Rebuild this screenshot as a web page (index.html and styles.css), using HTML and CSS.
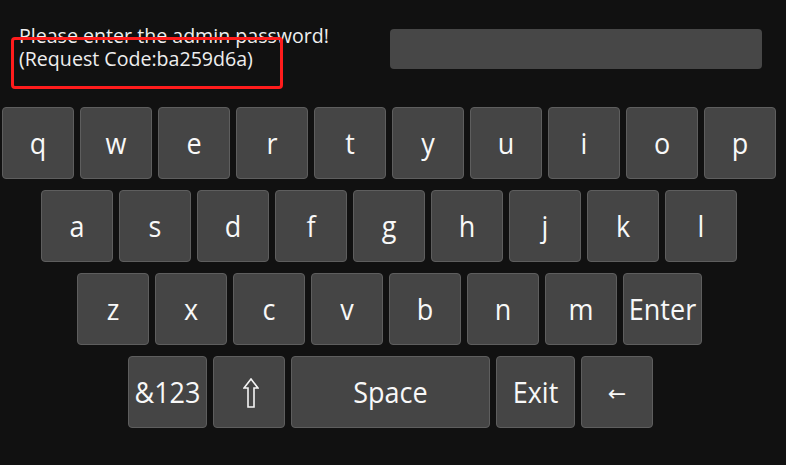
FILE: index.html
```html
<!DOCTYPE html>
<html>
<head>
<meta charset="utf-8">
<link rel="stylesheet" href="styles.css">
</head>
<body>
<div class="screen">
  <div class="header">
    <div class="prompt">
      <div class="line">Please enter the admin password!</div>
      <div class="line">(Request Code:ba259d6a)</div>
      <div class="highlight"></div>
    </div>
    <div class="field"></div>
  </div>
  <div class="keyboard">
    <div class="row row1">
      <div class="key"><span>q</span></div>
      <div class="key"><span>w</span></div>
      <div class="key"><span>e</span></div>
      <div class="key"><span>r</span></div>
      <div class="key"><span>t</span></div>
      <div class="key"><span>y</span></div>
      <div class="key"><span>u</span></div>
      <div class="key"><span>i</span></div>
      <div class="key"><span>o</span></div>
      <div class="key"><span>p</span></div>
    </div>
    <div class="row row2">
      <div class="key"><span>a</span></div>
      <div class="key"><span>s</span></div>
      <div class="key"><span>d</span></div>
      <div class="key"><span>f</span></div>
      <div class="key"><span>g</span></div>
      <div class="key"><span>h</span></div>
      <div class="key"><span>j</span></div>
      <div class="key"><span>k</span></div>
      <div class="key"><span>l</span></div>
    </div>
    <div class="row row3">
      <div class="key"><span>z</span></div>
      <div class="key"><span>x</span></div>
      <div class="key"><span>c</span></div>
      <div class="key"><span>v</span></div>
      <div class="key"><span>b</span></div>
      <div class="key"><span>n</span></div>
      <div class="key"><span>m</span></div>
      <div class="key wide"><span>Enter</span></div>
    </div>
    <div class="row row4">
      <div class="key wide"><span>&amp;123</span></div>
      <div class="key shift">
        <svg width="16" height="30" viewBox="0 0 16 30"><path d="M8 1 L15 10 L11 10 L11 29 L5 29 L5 10 L1 10 Z" fill="none" stroke="#f4f4f4" stroke-width="1.6" stroke-linejoin="miter"/></svg>
      </div>
      <div class="key space"><span>Space</span></div>
      <div class="key wide"><span>Exit</span></div>
      <div class="key"><span class="arrow">←</span></div>
    </div>
  </div>
</div>
</body>
</html>
```

FILE: styles.css
```css
* { box-sizing: border-box; }
html, body {
  margin: 0;
  padding: 0;
  background: #111111;
}
body {
  width: 786px;
  height: 465px;
  overflow: hidden;
  font-family: "Open Sans", "DejaVu Sans", sans-serif;
  color: #f2f2f2;
}
.screen {
  display: flex;
  flex-direction: column;
}
.header {
  display: flex;
  align-items: flex-start;
  height: 107px;
}
.prompt {
  position: relative;
  margin-left: 19px;
  margin-top: 24px;
  width: 371px;
  font-size: 19.6px;
  line-height: 23px;
  color: #eeeeee;
}
.line {
  transform-origin: left center;
  transform: scaleY(1.06);
}
.highlight {
  position: absolute;
  left: -8px;
  top: 13px;
  width: 272px;
  height: 52px;
  border: 3px solid #ff1c1c;
  border-radius: 4px;
}
.field {
  margin-top: 29px;
  width: 372px;
  height: 40px;
  background: #474747;
  border-radius: 4px;
}
.keyboard {
  display: flex;
  flex-direction: column;
  gap: 11px;
}
.row {
  display: flex;
  gap: 6px;
}
.row1 { margin-left: 2px; }
.row2 { margin-left: 41px; }
.row3 { margin-left: 77px; }
.row4 { margin-left: 128px; }
.key {
  width: 72px;
  height: 72px;
  background: #454545;
  border: 1px solid #5e5e5e;
  border-radius: 4px;
  display: flex;
  align-items: center;
  justify-content: center;
  font-size: 27px;
  color: #f8f8f8;
}
.key span {
  display: block;
  transform: scaleY(1.1);
  line-height: 1;
  margin-top: -2px;
}
.key.wide { width: 79px; }
.key.space { width: 199px; }
.key.shift svg { display: block; margin-top: 2px; margin-left: 4px; }
.key .arrow {
  font-family: "DejaVu Sans", sans-serif;
  font-size: 22px;
  transform: none;
  margin-top: 4px;
}
```
